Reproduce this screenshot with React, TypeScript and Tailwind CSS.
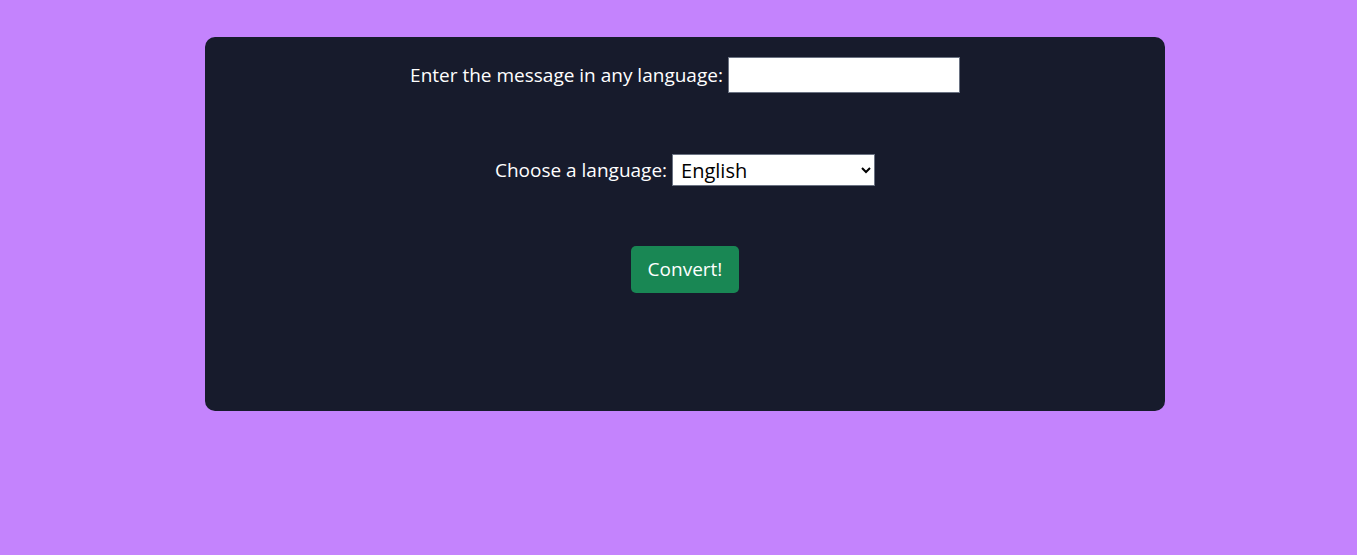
import React, { useState } from 'react';

export default function App() {
  const [message, setMessage] = useState('');
  const [language, setLanguage] = useState('English');

  return (
    <div
      className="min-h-screen w-full bg-[#c483fd] pt-[37px]"
      style={{ fontFamily: '"Open Sans", "Noto Sans", sans-serif' }}
    >
      <div className="ml-[205px] flex h-[374px] w-[960px] flex-col items-center rounded-[10px] bg-[#171b2c] pt-[20px] text-[19px] text-white">
        <div className="flex h-[36px] items-center gap-[5px]">
          <label htmlFor="msg">Enter the message in any language:</label>
          <input
            id="msg"
            value={message}
            onChange={(e) => setMessage(e.target.value)}
            className="h-[36px] w-[232px] border border-gray-500 bg-white px-1 text-black outline-none"
          />
        </div>

        <div className="mt-[61px] flex h-[32px] items-center gap-[5px]">
          <label htmlFor="lang">Choose a language:</label>
          <select
            id="lang"
            value={language}
            onChange={(e) => setLanguage(e.target.value)}
            className="h-[32px] w-[203px] border border-gray-500 bg-white pl-1 text-[20px] text-black"
          >
            <option>English</option>
            <option>Spanish</option>
            <option>French</option>
            <option>German</option>
          </select>
        </div>

        <button className="mt-[60px] h-[47px] w-[108px] rounded-[5px] bg-[#198754] text-[19px] text-white">
          Convert!
        </button>
      </div>
    </div>
  );
}
